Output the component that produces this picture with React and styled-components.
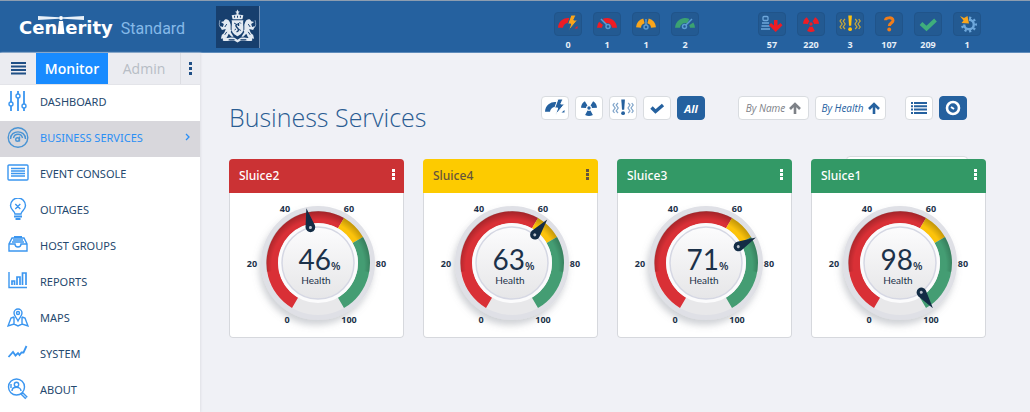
import React from "react";
import styled, { createGlobalStyle } from "styled-components";

const GlobalStyle = createGlobalStyle`
  *, *::before, *::after { box-sizing: border-box; }
  body {
    margin: 0;
    background: #f0f1f6;
    color: #1d4268;
    font-family: "Open Sans", "Noto Sans", sans-serif;
    font-size: 12px;
  }
  button { font: inherit; padding: 0; cursor: pointer; }
  ul { list-style: none; margin: 0; padding: 0; }
  svg { display: block; flex: none; }
`;

/* ---------- geometry helpers ---------- */

const polar = (cx, cy, r, deg) => {
  const a = ((deg - 90) * Math.PI) / 180;
  return `${(cx + r * Math.cos(a)).toFixed(2)} ${(cy + r * Math.sin(a)).toFixed(2)}`;
};

/* Ring sector; angles run clockwise from the top. */
const sector = (cx, cy, inner, outer, from, to) => {
  const large = to - from > 180 ? 1 : 0;
  return [
    `M${polar(cx, cy, outer, from)}`,
    `A${outer} ${outer} 0 ${large} 1 ${polar(cx, cy, outer, to)}`,
    `L${polar(cx, cy, inner, to)}`,
    `A${inner} ${inner} 0 ${large} 0 ${polar(cx, cy, inner, from)}Z`,
  ].join("");
};

/* ---------- status icons ---------- */

const StatusSvg = ({ children }) => (
  <svg width="24" height="20" viewBox="0 0 24 20" aria-hidden="true">{children}</svg>
);

const BoltGauge = ({ main = "#ee1c25", bolt = "#f9a51b", halo = "#235a92" }) => (
  <StatusSvg>
    <path d={sector(12, 14, 5, 10, -88, 8)} fill={main} />
    <path d="M18.500 14.500l3-2.500v2.500z" fill={main} />
    <path d="M15 1h5l-2.200 5h3.700L12.500 17l2.200-7h-3z" fill={bolt} stroke={halo} strokeWidth="1" />
  </StatusSvg>
);

const RedGauge = () => (
  <StatusSvg>
    <path d={sector(12, 14, 5, 10, -24, 88)} fill="#ee1c25" />
    <path d={sector(12, 14, 5, 10, -88, -52)} fill="#ee1c25" />
    <path d="M6 5l6 6" stroke="#5c9bd1" strokeWidth="1.500" />
    <circle cx="13" cy="12.500" r="2" fill="none" stroke="#5c9bd1" strokeWidth="1.500" />
  </StatusSvg>
);

const AmberGauge = () => (
  <StatusSvg>
    <path d={sector(12, 14, 5, 10, -86, -16)} fill="#f9a51b" />
    <path d={sector(12, 14, 5, 10, 16, 86)} fill="#f9a51b" />
    <path d="M12 5v6" stroke="#5c9bd1" strokeWidth="1.500" />
    <circle cx="12" cy="13" r="2" fill="none" stroke="#5c9bd1" strokeWidth="1.500" />
  </StatusSvg>
);

const GreenGauge = () => (
  <StatusSvg>
    <path d={sector(12, 14, 5, 10, -88, 26)} fill="#3ba272" />
    <path d={sector(12, 14, 5, 10, 56, 88)} fill="#3ba272" />
    <path d="M19 5l-6 6" stroke="#5c9bd1" strokeWidth="1.500" />
    <circle cx="11.500" cy="12.500" r="2" fill="none" stroke="#5c9bd1" strokeWidth="1.500" />
  </StatusSvg>
);

const HostDown = () => (
  <StatusSvg>
    <rect x="3" y="2.500" width="5" height="4" rx="1" fill="none" stroke="#6fa8dc" strokeWidth="1.300" />
    <path d="M2 9h7M1.500 12h8M1 15h9" stroke="#6fa8dc" strokeWidth="1.300" />
    <path d="M14 6h3.500v5.500l3-2.500 2 2.300L15.700 18 9 11.300 11 9l3 2.500z" fill="#ee1c25" />
  </StatusSvg>
);

const Radiation = ({ color = "#ee1c25" }) => (
  <StatusSvg>
    {[-60, 60, 180].map((a) => (
      <path key={a} d={sector(12, 10, 3, 8, a - 29, a + 29)} fill={color} />
    ))}
    <circle cx="12" cy="10" r="1.700" fill={color} />
  </StatusSvg>
);

const Alert = ({ color = "#ffc20e", wave = "#c9a83a" }) => (
  <StatusSvg>
    <path d="M10.300 1.500h3.600l-.7 10.300h-2.200z" fill={color} />
    <circle cx="12.100" cy="15.200" r="1.900" fill={color} />
    <g fill="none" stroke={wave} strokeWidth="1.200">
      <path d="M3.500 5L2 7l2.200 3L2 13l1.500 2M7 5L5.200 7l2 3-2 3L7 15" />
      <path d="M20.700 5L22.200 7 20 10l2.200 3-1.500 2M17.200 5L19 7l-2 3 2 3-1.800 2" />
    </g>
  </StatusSvg>
);

const Question = () => (
  <StatusSvg>
    <path d="M8.500 6.300C8.500 3.500 16 2.600 16 6.400c0 2.700-3.700 2.500-3.700 5.600" fill="none" stroke="#f07d1a" strokeWidth="3" />
    <circle cx="12.200" cy="15.500" r="1.900" fill="#f07d1a" />
  </StatusSvg>
);

const Check = ({ color = "#3fae7c", small }) => (
  <StatusSvg>
    <path
      d={small ? "M6.500 9.500l4 4L18 7" : "M5 9.500l5.500 5L19.500 6"}
      fill="none" stroke={color} strokeWidth={small ? 3.400 : 4}
    />
  </StatusSvg>
);

const GearArrow = () => (
  <StatusSvg>
    <path d={sector(14, 10.5, 3.6, 6, 0, 270)} fill="#6fa8dc" />
    {[10, 50, 90, 130, 170, 210, 250].map((a) => (
      <path key={a} d={sector(14, 10.5, 5.5, 8, a - 9, a + 9)} fill="#6fa8dc" />
    ))}
    <path d="M5 2l4 2 3.500-2L14 9.500 6.500 9l2-2.500z" fill="#f9a51b" />
  </StatusSvg>
);

/* ---------- header ---------- */

const TopBar = styled.header`
  display: flex;
  align-items: flex-start;
  padding: 5px 49px 1px 19px;
  background: #25619f;
  border-top: 1px solid #8d9db0;
  border-bottom: 1px solid #5f8cbb;
`;

const Brand = styled.a`
  display: flex;
  align-items: baseline;
  padding-top: 10px;
  color: #fff;
  text-decoration: none;
  font: bold 18px/22px "DejaVu Sans", sans-serif;

  svg { overflow: visible; }
`;

const Edition = styled.span`
  margin-left: 8px;
  color: #86b9e8;
  font: 400 16px/22px Roboto, sans-serif;
`;

const Emblem = styled.div`
  margin-left: 31px;
  padding: 1px;
  background: #173f6e;
  border-right: 1px solid #6f8eb3;
`;

const Counters = styled.ul`
  display: flex;
  gap: 11px;
  margin-left: ${(p) => (p.$push ? "auto" : "59px")};
  padding-top: 6px;
`;

const Counter = styled.button`
  display: flex;
  flex-direction: column;
  align-items: center;
  gap: 3px;
  width: 28px;
  background: none;
  border: 0;
  color: #e6eff8;
  font-size: 9px;
  font-weight: 700;
  line-height: 12px;
`;

const CounterIcon = styled.span`
  display: grid;
  place-items: center;
  width: 28px;
  height: 24px;
  background: #235a92;
  border: 1px solid #20548a;
  border-radius: 4px;
`;

const serviceCounters = [
  ["Services failing", BoltGauge, 0],
  ["Services critical", RedGauge, 1],
  ["Services warning", AmberGauge, 1],
  ["Services healthy", GreenGauge, 2],
];

const hostCounters = [
  ["Down", HostDown, 57],
  ["Critical", Radiation, 220],
  ["Warning", Alert, 3],
  ["Unknown", Question, 107],
  ["OK", Check, 209],
  ["Maintenance", GearArrow, 1],
];

const CounterGroup = ({ items, push }) => (
  <Counters $push={push}>
    {items.map(([label, Icon, count]) => (
      <li key={label}>
        <Counter type="button" title={label}>
          <CounterIcon><Icon /></CounterIcon>
          {count}
        </Counter>
      </li>
    ))}
  </Counters>
);

const Lighthouse = () => (
  <svg width="8" height="18" viewBox="0 0 8 18" aria-hidden="true">
    <path d="M-19 0L2 1.200v1.600L-19 4zM27 0L6 1.200v1.600L27 4z" fill="#e8f0f8" />
    <circle cx="4" cy="2" r="2" fill="#fff" />
    <path d="M2 5h4l1.500 13h-7z" fill="#fff" />
  </svg>
);

const Crest = () => (
  <svg width="41" height="40" viewBox="0 0 42 40" aria-hidden="true">
    <g fill="#e3eaf2">
      <path d="M21 2l1 2 1.500.500-1.500.800v2l5 .700-1 4H16l-1-4 5-.700v-2l-1.500-.800L20 4z" />
      <path d="M15 13h12v9c0 4-3.500 6-6 7.500-2.500-1.500-6-3.500-6-7.500z" />
      <path d="M13 15c-1-3-5-4-6-1l-3 1 3 2-1 3-3-1 2 4 4-1c-1 3-2 5-4 6l-1 4 6-1 2-4 3 3h2l-3-5 2-4z" />
      <path d="M29 15c1-3 5-4 6-1l3 1-3 2 1 3 3-1-2 4-4-1c1 3 2 5 4 6l1 4-6-1-2-4-3 3h-2l3-5-2-4z" />
      <path d="M6 31c5 1 8-1 12 0l3 2 3-2c4-1 7 1 12 0v3c-5 1-8-1-12 0l-3 2-3-2c-4-1-7 1-12 0z" />
    </g>
    <g fill="none" stroke="#173f6e">
      <path d="M18 8.500v2M21 8.500v2M24 8.500v2M17.500 16l2 1M23 15l1.500 1.500M18 23l1.500-1M24 24l-1-2M10 17l-2 3M32 17l2 3M10 25l-2 3M32 25l2 3M12 33h6M24 33h6M14.500 14v9M27.500 14v9" />
      <path d="M21 17c-3 1-1 3 0 4s2 3-1 4M22 16v3" strokeWidth="1.500" />
    </g>
    <path d="M3 13c-1 4-1 6 1 8M39 13c1 4 1 6-1 8" fill="none" stroke="#8ba4c0" />
  </svg>
);

/* ---------- sidebar ---------- */

const Shell = styled.div`
  display: flex;
  align-items: stretch;
  min-height: calc(100vh - 53px);
`;

const Sidebar = styled.aside`
  flex: 0 0 200px;
  background: #fff;
  box-shadow: 1px 0 2px #e0e1e7;
`;

const Tabs = styled.div`
  display: grid;
  grid-template-columns: 36px 72px 72px 20px;
  height: 32px;
  background: #ebecf1;
  border-bottom: 1px solid #e3e4e9;
`;

const Tab = styled.button`
  display: grid;
  place-items: center;
  height: 31px;
  border: 0;
  border-left: ${(p) => (p.$divided ? "1px solid #dcdde2" : "0")};
  background: ${(p) => (p.$active ? "#188bff" : "transparent")};
  color: ${(p) => (p.$active ? "#fff" : "#b7bdc5")};
  font-size: 14px;
  font-weight: ${(p) => (p.$active ? 600 : 400)};
`;

const MenuLink = styled.a`
  display: flex;
  align-items: center;
  gap: 11px;
  height: 36px;
  padding: 0 9px 4px 7px;
  background: ${(p) => (p.$active ? "#d8d7dc" : "transparent")};
  color: ${(p) => (p.$active ? "#2b8ff5" : "#24486e")};
  font-family: "Noto Sans", sans-serif;
  font-size: 11px;
  text-decoration: none;

  & > svg:last-child { margin-left: auto; }
`;

const Glyph = ({ children, color = "#3b96f0" }) => (
  <svg width="22" height="22" viewBox="0 0 22 22" fill="none" stroke={color} strokeWidth="1.400" aria-hidden="true">
    {children}
  </svg>
);

const menu = [
  ["DASHBOARD", <Glyph key="i">
    <path d="M4 1v11M4 16v5M11 1v3M11 8v13M17 1v13M17 18v3" strokeWidth="1.800" />
    <circle cx="4" cy="14" r="2" /><circle cx="11" cy="6" r="2" /><circle cx="17" cy="16" r="2" />
  </Glyph>],
  ["BUSINESS SERVICES", <Glyph key="i" color="#4a94d4">
    <circle cx="11" cy="11.500" r="9.800" />
    <path d="M3.500 13c0-9.500 15-9.500 15 0M6.500 12c1-5 8-5 9 0" />
    <circle cx="10.500" cy="13.500" r="1.800" /><path d="M12.500 10.500v5" />
  </Glyph>],
  ["EVENT CONSOLE", <Glyph key="i">
    <rect x="1" y="3" width="20" height="15" rx="1" />
    <path d="M4 6.500h14M4 9h14M4 11.500h14M4 14h14" />
  </Glyph>],
  ["OUTAGES", <Glyph key="i">
    <path d="M8 16c0-3-4.500-4-4.500-8.500a7.500 7.500 0 0 1 15 0C18.500 12 14 13 14 16zM8.300 6l5 5M13.300 6l-5 5" />
    <path d="M7 18.500h8M8.500 21h5" strokeWidth="1.800" />
  </Glyph>],
  ["HOST GROUPS", <Glyph key="i">
    <path d="M2 10v7h18v-7l-3-6H5zM2 10h6c0 4 6 4 6 0h6M5 8h12M6 6h10M7 4h8" />
    <path d="M7 3h8" strokeWidth="2" />
  </Glyph>],
  ["REPORTS", <Glyph key="i">
    <path d="M2 2v15.500h18" />
    <path d="M5 15v-4h2.500v4M10 15V7h3v8M15.500 15V3H19v12" strokeWidth="1.700" />
  </Glyph>],
  ["MAPS", <Glyph key="i">
    <path d="M11 15c-2-4-4-5-4-8a4 4 0 0 1 8 0c0 3-2 4-4 8z" />
    <circle cx="11" cy="7" r="1.500" />
    <path d="M7 11l-3 1-3 8 6-2 4 2 4-2 6 2-3-8-3-1M7 11v7M15 11v7" />
  </Glyph>],
  ["SYSTEM", <Glyph key="i">
    <path d="M1.500 15l4.500-5 2.500 3.500 2.500-2.500 1.500 2 2-2.500h2L19.500 4" strokeWidth="1.800" />
  </Glyph>],
  ["ABOUT", <Glyph key="i">
    <circle cx="9.500" cy="9" r="8" /><circle cx="9.500" cy="6.500" r="2.200" />
    <path d="M5 13c0-5 9-5 9 0M4 6v4" />
    <path d="M14.500 15l5 5" strokeWidth="3.500" /><path d="M15.500 16l3.500 3.500" stroke="#fff" strokeWidth="1" />
  </Glyph>],
];

/* ---------- toolbar ---------- */

const Main = styled.main`
  flex: 1;
  min-width: 0;
  padding: 43px 44px 32px 29px;
`;

const PageHead = styled.div`
  display: flex;
  align-items: flex-start;
  margin-bottom: 26px;
`;

const Title = styled.h1`
  margin: 0 auto 0 0;
  padding-top: 5px;
  color: #2a5c92;
  font-size: 25px;
  font-weight: 300;
  line-height: 32px;
`;

const ButtonGroup = styled.div`
  display: flex;
  gap: 6px;
  margin-right: ${(p) => p.$after || "0"};
`;

const ToolButton = styled.button`
  display: flex;
  align-items: center;
  justify-content: center;
  gap: 4px;
  width: ${(p) => (p.$wide ? "71px" : "28px")};
  height: 24px;
  background: ${(p) => (p.$active ? "#25619f" : "#fff")};
  border: 1px solid ${(p) => (p.$active ? "#25619f" : "#d9dce0")};
  border-radius: 4px;
  color: ${(p) => (p.$active ? "#fff" : p.$muted ? "#7d8187" : "#25619f")};
  font-size: ${(p) => (p.$wide ? "10px" : "11px")};
  font-style: italic;
  font-weight: ${(p) => (p.$active ? 700 : 400)};
`;

const ArrowUp = () => (
  <svg width="12" height="12" viewBox="0 0 12 12" fill="none" stroke="currentColor" strokeWidth="2.600" aria-hidden="true">
    <path d="M6 12V2M1 7l5-5 5 5" />
  </svg>
);

/* ---------- cards ---------- */

const Cards = styled.section`
  position: relative;
  display: grid;
  grid-template-columns: repeat(4, minmax(0, 1fr));
  gap: 19px;
`;

/* Panel tucked behind the last card, its top edge showing above it. */
const TuckedPanel = styled.div`
  position: absolute;
  top: -3px;
  right: 18px;
  width: 122px;
  height: 24px;
  background: #fff;
  border: 1px solid #d9dce0;
  border-radius: 4px;
`;

const Card = styled.article`
  position: relative;
  background: #fff;
  border-radius: 4px;
  box-shadow: inset 0 0 0 1px #d6d8dd;
  overflow: hidden;
`;

const CardHead = styled.header`
  display: flex;
  align-items: center;
  justify-content: space-between;
  height: 34px;
  padding: 0 5px 0 10px;
  background: ${(p) => p.$bg};
  color: ${(p) => p.$fg};

  h2 { margin: 0; font: 500 12px/16px "Noto Sans", sans-serif; }
`;

const MoreButton = styled.button`
  width: 10px;
  height: 20px;
  padding: 0 3px 4px;
  background: none;
  border: 0;
  color: ${(p) => p.$fg};
`;

const GaugeBox = styled.div`
  display: flex;
  justify-content: center;
`;

const Dots = () => (
  <svg width="4" height="12" viewBox="0 0 4 12" fill="currentColor" aria-hidden="true">
    <path d="M0 1h3v3H0zM0 5h3v3H0zM0 9h3v3H0z" />
  </svg>
);

const scale = [[0, 57, 130], [20, 22, 74], [40, 55, 19], [60, 119, 19], [80, 151, 74], [100, 119, 130]];

const Gauge = ({ value, id }) => (
  <svg width="173" height="145" viewBox="0 0 173 145" role="img" aria-label={`Health ${value}%`}>
    <defs>
      <linearGradient id={`${id}-disc`} x1="0" y1="0" x2="0" y2="1">
        <stop offset="0" stopColor="#fcfcfd" /><stop offset="1" stopColor="#e6e6e8" />
      </linearGradient>
      <filter id={`${id}-shadow`} x="-20%" y="-20%" width="140%" height="150%">
        <feDropShadow dx="-2" dy="5" stdDeviation="3.500" floodColor="#777b88" floodOpacity=".35" />
      </filter>
      <radialGradient id={`${id}-shade`} gradientUnits="userSpaceOnUse" cx="88" cy="73" r="55">
        <stop offset=".84" stopColor="#000" stopOpacity="0" /><stop offset="1" stopColor="#000" stopOpacity=".26" />
      </radialGradient>
    </defs>
    <circle cx="88" cy="70" r="57" fill="#dfe0e6" filter={`url(#${id}-shadow)`} />
    <circle cx="88" cy="70" r="52" fill="#e8e8ea" />
    <path d={sector(88, 70, 40, 52, -150, 30)} fill="#d93036" />
    <path d={sector(88, 70, 40, 52, 30, 60)} fill="#fcc30b" />
    <path d={sector(88, 70, 40, 52, 60, 150)} fill="#449d73" />
    <path d={sector(88, 70, 40, 52, -100, 100)} fill={`url(#${id}-shade)`} />
    <circle cx="88" cy="70" r="40" fill="#fbfbfc" />
    <circle cx="88" cy="70" r="36" fill={`url(#${id}-disc)`} stroke="#d5d7e3" strokeWidth="1.500" />
    <g transform={`rotate(${value * 3 - 150} 88 70)`}>
      <path d="M88 14l-4.800 18.500a4.900 4.900 0 1 0 9.600 0z" fill="#132c45" />
      <circle cx="88" cy="33.800" r="1.500" fill="#b8c0ca" />
    </g>
    <g fill="#1c3149" fontFamily="Open Sans, Noto Sans, sans-serif">
      <g fontSize="9" fontWeight="700" textAnchor="middle">
        {scale.map(([n, x, y]) => <text key={n} x={x} y={y}>{n}</text>)}
      </g>
      <text x="101" y="77" fontSize="28" fontFamily="Lato, sans-serif" textAnchor="end">{value}</text>
      <text x="101" y="77" fontSize="11" fontWeight="600">%</text>
      <text x="86" y="91" fontSize="10" fontFamily="Lato, sans-serif" textAnchor="middle">Health</text>
    </g>
  </svg>
);

const services = [
  { name: "Sluice2", value: 46, bg: "#cb3234", fg: "#fff" },
  { name: "Sluice4", value: 63, bg: "#fdcb00", fg: "#66553c" },
  { name: "Sluice3", value: 71, bg: "#339966", fg: "#fff" },
  { name: "Sluice1", value: 98, bg: "#339966", fg: "#fff" },
];

const blue = "#25619f";

export default function App() {
  return (
    <>
      <GlobalStyle />
      <TopBar>
        <Brand href="#" aria-label="Centerity Standard">
          <span>Cen</span>
          <Lighthouse />
          <span>erity</span>
          <Edition>Standard</Edition>
        </Brand>
        <Emblem><Crest /></Emblem>
        <CounterGroup items={serviceCounters} push />
        <CounterGroup items={hostCounters} />
      </TopBar>

      <Shell>
        <Sidebar>
          <Tabs>
            <Tab type="button" aria-label="Toggle menu">
              <svg width="15" height="13" viewBox="0 0 15 13" fill="#1f4f86" aria-hidden="true">
                <path d="M0 0h15v2H0zM0 3.500h15v2H0zM0 7h15v2H0zM0 10.500h15v2H0z" />
              </svg>
            </Tab>
            <Tab type="button" $active>Monitor</Tab>
            <Tab type="button">Admin</Tab>
            <Tab type="button" $divided aria-label="More">
              <svg width="3" height="13" viewBox="0 0 3 13" fill="#1f4f86" aria-hidden="true">
                <path d="M0 0h3v3H0zM0 5h3v3H0zM0 10h3v3H0z" />
              </svg>
            </Tab>
          </Tabs>
          <nav>
            <ul>
              {menu.map(([label, icon]) => {
                const active = label === "BUSINESS SERVICES";
                return (
                  <li key={label}>
                    <MenuLink href="#" $active={active}>
                      {icon}
                      <span>{label}</span>
                      {active && (
                        <svg width="6" height="8" viewBox="0 0 6 8" fill="none" stroke="#2b8ff5" aria-hidden="true">
                          <path d="M1 1l3 3-3 3" strokeWidth="1.300" />
                        </svg>
                      )}
                    </MenuLink>
                  </li>
                );
              })}
            </ul>
          </nav>
        </Sidebar>

        <Main>
          <PageHead>
            <Title>Business Services</Title>
            <ButtonGroup $after="33px">
              <ToolButton type="button" aria-label="Failing"><BoltGauge main={blue} bolt={blue} halo="#fff" /></ToolButton>
              <ToolButton type="button" aria-label="Critical"><Radiation color={blue} /></ToolButton>
              <ToolButton type="button" aria-label="Warning"><Alert color={blue} wave="#7ea3c9" /></ToolButton>
              <ToolButton type="button" aria-label="OK"><Check color={blue} small /></ToolButton>
              <ToolButton type="button" $active>All</ToolButton>
            </ButtonGroup>
            <ButtonGroup $after="19px">
              <ToolButton type="button" $wide $muted>By Name <ArrowUp /></ToolButton>
              <ToolButton type="button" $wide>By Health <ArrowUp /></ToolButton>
            </ButtonGroup>
            <ButtonGroup $after="19px">
              <ToolButton type="button" aria-label="List view">
                <svg width="16" height="12" viewBox="0 0 16 12" fill={blue} aria-hidden="true">
                  <path d="M0 0h2v2H0zM3 0h13v2H3zM0 3.300h2v2H0zM3 3.300h13v2H3zM0 6.600h2v2H0zM3 6.600h13v2H3zM0 10h2v2H0zM3 10h13v2H3z" />
                </svg>
              </ToolButton>
              <ToolButton type="button" $active aria-label="Gauge view">
                <svg width="16" height="16" viewBox="0 0 16 16" fill="none" stroke="#fff" aria-hidden="true">
                  <circle cx="8" cy="8" r="6" strokeWidth="2.600" />
                  <path d="M6 7l3 2" strokeWidth="2" />
                </svg>
              </ToolButton>
            </ButtonGroup>
          </PageHead>

          <Cards>
            <TuckedPanel />
            {services.map(({ name, value, bg, fg }) => (
              <Card key={name}>
                <CardHead $bg={bg} $fg={fg}>
                  <h2>{name}</h2>
                  <MoreButton type="button" $fg={fg} aria-label={`${name} options`}><Dots /></MoreButton>
                </CardHead>
                <GaugeBox><Gauge value={value} id={name} /></GaugeBox>
              </Card>
            ))}
          </Cards>
        </Main>
      </Shell>
    </>
  );
}
